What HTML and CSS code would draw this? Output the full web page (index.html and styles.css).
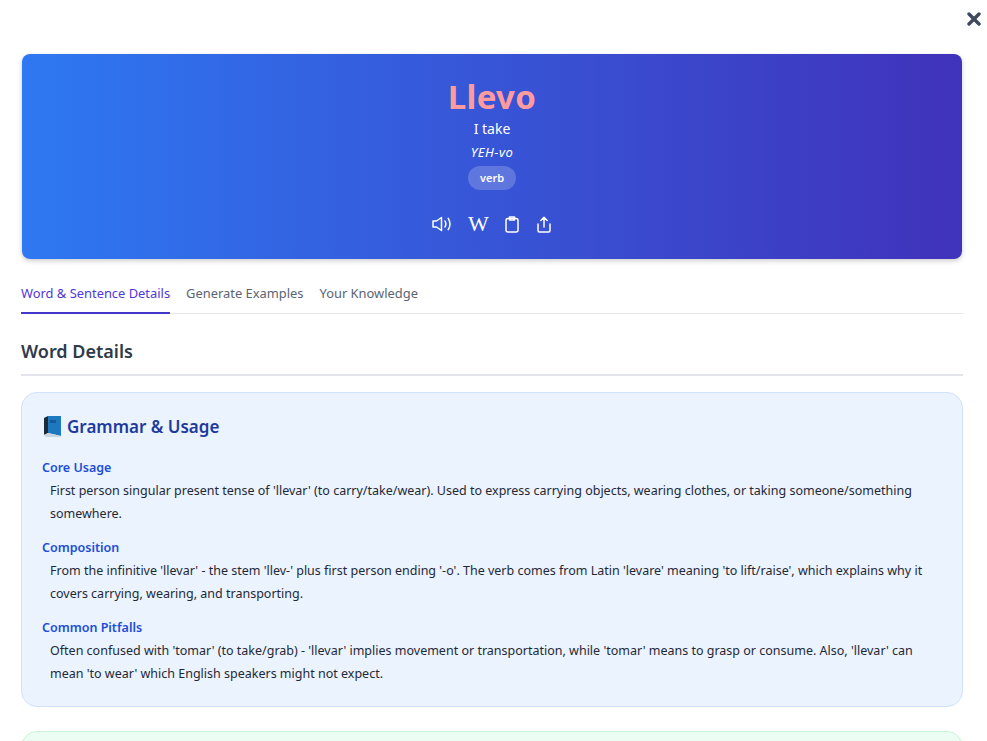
FILE: index.html
```html
<!DOCTYPE html>
<html lang="es">
<head>
    <meta charset="UTF-8">
    <title>Llevo</title>
    <link rel="stylesheet" href="styles.css">
</head>
<body>
    <div class="modal">
        <div class="close-row">
            <button class="close-btn" aria-label="Close">
                <svg viewBox="0 0 14 14" width="14" height="14"><path d="M2 2 12 12M12 2 2 12" fill="none" stroke="#3d4a5c" stroke-width="3.4" stroke-linecap="round"/></svg>
            </button>
        </div>

        <header class="hero">
            <h1 class="word">Llevo</h1>
            <div class="translation">I take</div>
            <div class="phonetic">YEH-vo</div>
            <span class="pos-badge">verb</span>
            <div class="hero-actions">
                <svg class="icon" viewBox="0 0 20 16" width="20" height="16"><path d="M1 5v6h3.500l5 3.500V1.500L4.500 5zM13 5c1 1.800 1 4.200 0 6M16.200 2.300c2.100 3.300 2.100 8.100 0 11.400"/></svg>
                <span class="icon-wiki">W</span>
                <svg class="icon" viewBox="0 0 16 17" width="16" height="17"><rect x="2" y="2.500" width="12" height="13.500" rx="2"/><path d="M5.500 1h5v3h-5z"/></svg>
                <svg class="icon" viewBox="0 0 16 17" width="16" height="17"><path d="M8 11V1.500M4.800 4.500 8 1.300l3.200 3.200M2 8v6.500q0 1.500 1.500 1.500h9q1.500 0 1.500-1.500V8"/></svg>
            </div>
        </header>

        <nav class="tabs">
            <a class="tab active">Word &amp; Sentence Details</a>
            <a class="tab">Generate Examples</a>
            <a class="tab">Your Knowledge</a>
        </nav>

        <h2 class="section-title">Word Details</h2>

        <section class="card card-blue">
            <h3 class="card-title">
                <svg class="book" viewBox="0 0 20 22" width="20" height="22">
                    <path d="M2 3 6 1v17l-4 2z" fill="#1c2a38"/>
                    <path d="M6 1h13v20L6 18z" fill="#1d78bf"/>
                    <path d="M2 20l4-2 13 3-1 1H4z" fill="#c9d6de"/>
                    <path d="M8 5h6v3H8z" fill="#155a94"/>
                </svg>
                Grammar &amp; Usage
            </h3>
            <div class="item">
                <h4>Core Usage</h4>
                <p>First person singular present tense of 'llevar' (to carry/take/wear). Used to express carrying objects, wearing clothes, or taking someone/something somewhere.</p>
            </div>
            <div class="item">
                <h4>Composition</h4>
                <p>From the infinitive 'llevar' - the stem 'llev-' plus first person ending '-o'. The verb comes from Latin 'levare' meaning 'to lift/raise', which explains why it covers carrying, wearing, and transporting.</p>
            </div>
            <div class="item">
                <h4>Common Pitfalls</h4>
                <p>Often confused with 'tomar' (to take/grab) - 'llevar' implies movement or transportation, while 'tomar' means to grasp or consume. Also, 'llevar' can mean 'to wear' which English speakers might not expect.</p>
            </div>
        </section>

        <section class="card card-green"></section>
    </div>
</body>
</html>
```

FILE: styles.css
```css
html, body { margin: 0; height: 741px; overflow: hidden; background: white; }
body { font-family: "Noto Sans", sans-serif; color: #1f2937; }
.modal { height: 741px; overflow: hidden; padding: 0 24px 0 21px; }
.close-row { display: flex; justify-content: flex-end; height: 54px; margin-right: -18px; }
.close-btn { width: 14px; height: 14px; margin-top: 12px; padding: 0; border: none; background: none; cursor: pointer; }
.close-btn svg { display: block; }

.hero { display: flex; flex-direction: column; align-items: center; height: 205px; margin-left: 1px; margin-right: 1px; border-radius: 8px; background: linear-gradient(90deg, #2e78f2, #4032bb); color: white; box-shadow: 0 2px 5px rgba(0, 0, 0, 0.2); box-sizing: border-box; padding-top: 22px; }
.word { margin: 0; font-size: 33px; line-height: 42px; letter-spacing: 0.3px; font-weight: 700; color: #ff9a9e; }
.translation { font-size: 14px; line-height: 24px; margin-top: -1px; }
.phonetic { font-size: 13px; line-height: 20px; letter-spacing: 0.5px; font-style: italic; margin-top: 1px; }
.pos-badge { margin-top: 4px; padding: 0 12px; height: 24px; line-height: 23px; font-size: 11px; font-weight: 600; border-radius: 12px; background: rgba(255, 255, 255, 0.2); }
.hero-actions { display: flex; align-items: center; gap: 16px; margin-top: 24px; height: 20px; }
.icon { fill: none; stroke: white; stroke-width: 1.5; stroke-linecap: round; stroke-linejoin: round; display: block; }
.icon-wiki { width: 20px; text-align: center; font-family: "Liberation Serif", serif; font-size: 22px; line-height: 20px; }

.tabs { display: flex; gap: 16px; height: 40px; margin-top: 14px; border-bottom: 1px solid #e5e7eb; }
.tab { font-size: 12.900px; line-height: 41px; font-weight: 400; color: #5b6472; }
.tab.active { color: #4f38dc; border-bottom: 2px solid #4338ca; height: 39px; line-height: 40px; }

.section-title { margin: 23px 0 16px; padding-bottom: 8px; height: 29px; line-height: 29px; font-size: 18px; font-weight: 600; color: #2f3a4a; border-bottom: 2px solid #e3e5ea; }
.card { border-radius: 16px; border: 1px solid; box-sizing: border-box; }
.card-blue { height: 315px; padding: 19px 20px 20px; background: #ebf3fe; border-color: #cfe2fb; }
.card-green { height: 60px; margin-top: 24px; background: #ecfdf3; border-color: #c8f5d8; }
.card-title { display: flex; align-items: center; gap: 5px; margin: 0 0 16px; height: 28px; font-size: 17px; font-weight: 600; color: #1e3a9e; }
.item { margin-bottom: 11px; }
.item h4 { margin: 0; font-size: 12.500px; line-height: 23px; font-weight: 600; color: #1d4ed8; }
.item p { margin: 0 0 0 8px; font-size: 12.500px; line-height: 23px; color: #1f2937; }
```
